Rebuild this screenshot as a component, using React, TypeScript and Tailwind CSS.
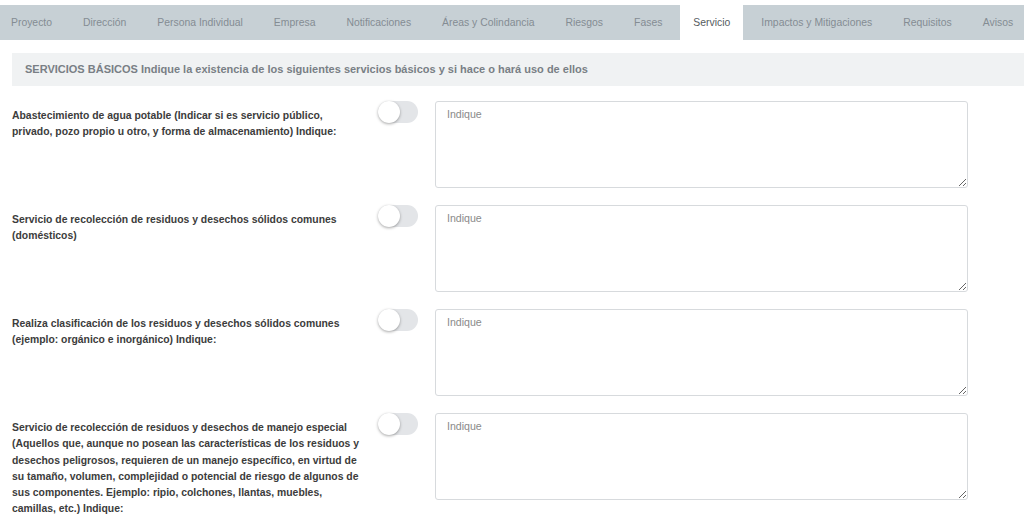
import { useState } from "react";

const tabs = [
  "Proyecto",
  "Dirección",
  "Persona Individual",
  "Empresa",
  "Notificaciones",
  "Áreas y Colindancia",
  "Riesgos",
  "Fases",
  "Servicio",
  "Impactos y Mitigaciones",
  "Requisitos",
  "Avisos",
];

const rows = [
  "Abastecimiento de agua potable (Indicar si es servicio público, privado, pozo propio u otro, y forma de almacenamiento) Indique:",
  "Servicio de recolección de residuos y desechos sólidos comunes (domésticos)",
  "Realiza clasificación de los residuos y desechos sólidos comunes (ejemplo: orgánico e inorgánico) Indique:",
  "Servicio de recolección de residuos y desechos de manejo especial (Aquellos que, aunque no posean las características de los residuos y desechos peligrosos, requieren de un manejo específico, en virtud de su tamaño, volumen, complejidad o potencial de riesgo de algunos de sus componentes. Ejemplo: ripio, colchones, llantas, muebles, camillas, etc.) Indique:",
];

function Toggle() {
  const [on, setOn] = useState(false);
  return (
    <button
      onClick={() => setOn(!on)}
      className={`relative h-[22px] w-[40px] rounded-full transition-colors ${on ? "bg-[#5b9bd5]" : "bg-[#e3e5e8]"}`}
    >
      <span
        className={`absolute top-0 h-[22px] w-[22px] rounded-full bg-white shadow-[0_1px_3px_rgba(0,0,0,0.35)] transition-all ${on ? "left-[18px]" : "left-0"}`}
      />
    </button>
  );
}

export default function App() {
  return (
    <div className="min-h-[525px] bg-white font-['Liberation_Sans',Arial,sans-serif] text-[10.4px]">
      <div className="h-[5px]" />
      <nav className="flex h-[35px] items-stretch overflow-hidden bg-[#c7d0d5]">
        {tabs.map((t) => (
          <div
            key={t}
            className={`flex shrink-0 items-center whitespace-nowrap px-[13px] first:pl-[11px] ${
              t === "Servicio" ? "bg-white text-[#555b60]" : "text-[#848c93]"
            } ${t === "Proyecto" ? "" : "ml-[5px]"}`}
          >
            {t}
          </div>
        ))}
      </nav>

      <div className="ml-[12px] mt-[13px] flex h-[33px] items-center bg-[#f0f2f3] pl-[13px] text-[11px] font-bold text-[#797f85]">
        SERVICIOS BÁSICOS Indique la existencia de los siguientes servicios básicos y si hace o hará uso de ellos
      </div>

      <div className="mt-[15px] flex flex-col gap-[17px] pl-[12px]">
        {rows.map((r, i) => (
          <div key={i} className="flex items-start">
            <label className="w-[352px] pt-[7px] font-bold leading-[16.3px] text-[#3c3c3c]">{r}</label>
            <div className="ml-[14px] w-[57px]">
              <Toggle />
            </div>
            <textarea
              placeholder="Indique"
              className="h-[87px] w-[533px] rounded-[3px] border border-[#d7dadd] px-[11px] py-[5px] text-[10.6px] text-[#555] outline-none placeholder:text-[#8a8a8a]"
            />
          </div>
        ))}
      </div>
    </div>
  );
}
